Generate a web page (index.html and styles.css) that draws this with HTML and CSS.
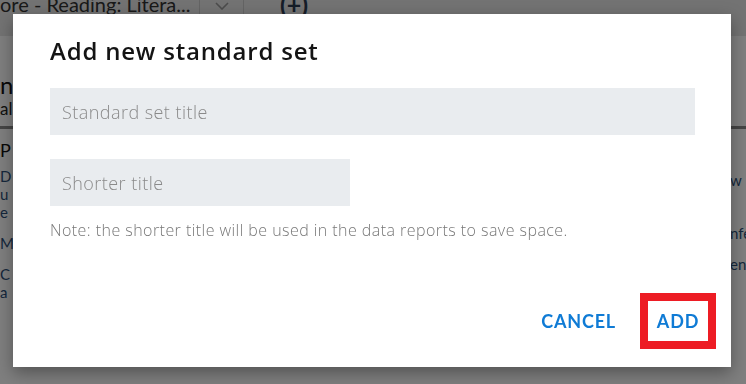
FILE: index.html
```html
<!DOCTYPE html>
<html lang="en">
<head>
    <meta charset="UTF-8">
    <title>Add new standard set</title>
    <link rel="stylesheet" href="styles.css">
</head>
<body>
    <div class="page">
        <div class="topbar">
            <div class="tab-title">ore - Reading: Litera...</div>
            <div class="tab-toggle">
                <svg width="14" height="8" viewBox="0 0 14 8"><path d="M1 1l6 6 6-6" fill="none" stroke="#999" stroke-width="1.6"/></svg>
            </div>
            <div class="tab-add">(+)</div>
        </div>

        <div class="sub-head">
            <div class="sub-name">nded</div>
            <div class="sub-caption">al</div>
        </div>

        <div class="columns">
            <div class="col-left">
                <div class="item-title">P</div>
                <div class="item-text">D<br>u<br>e</div>
                <div class="item-text spaced">M</div>
                <div class="item-text spaced">C<br>a</div>
            </div>
            <div class="col-right">
                <div class="item-text">w</div>
                <div class="item-text spaced-lg">nfe</div>
                <div class="item-text spaced">en</div>
            </div>
        </div>
    </div>

    <div class="overlay"></div>

    <div class="dialog">
        <h2 class="dialog-title">Add new standard set</h2>
        <input class="field field-wide" type="text" placeholder="Standard set title">
        <input class="field field-short" type="text" placeholder="Shorter title">
        <p class="note">Note: the shorter title will be used in the data reports to save space.</p>
        <div class="actions">
            <button class="text-btn">CANCEL</button>
            <button class="text-btn highlighted">ADD</button>
        </div>
    </div>
</body>
</html>
```

FILE: styles.css
```css
body {
    margin: 0;
    font-family: Lato, "Open Sans", sans-serif;
    color: #222;
    background: #fff;
    overflow: hidden;
}

.page {
    width: 746px;
    height: 384px;
}

/* Kopfzeile mit Tabs */
.topbar {
    height: 36px;
    background: #e6e6e6;
    display: flex;
    align-items: flex-start;
}

.tab-title {
    width: 199px;
    font-size: 20px;
    line-height: 18px;
    margin-top: -5px;
    color: #333;
    white-space: nowrap;
    overflow: hidden;
    border-right: 1px solid #c8c8c8;
    height: 30px;
}

.tab-toggle {
    width: 44px;
    height: 30px;
    border-right: 1px solid #c8c8c8;
    display: flex;
    justify-content: center;
    padding-top: 2px;
    box-sizing: border-box;
}

.tab-add {
    margin-left: 36px;
    margin-top: -9px;
    font-size: 25px;
    line-height: 26px;
    font-weight: 700;
    color: #2a3a50;
}

.sub-head {
    padding-top: 36px;
    border-bottom: 3px solid #8a8a8a;
    box-sizing: border-box;
    height: 93px;
}

.sub-name {
    font-size: 24px;
    line-height: 26px;
    color: #111;
}

.sub-caption {
    font-size: 17px;
    line-height: 22px;
    color: #222;
}

.columns {
    display: flex;
    justify-content: space-between;
}

.col-left {
    padding-top: 10px;
}

.col-right {
    padding-top: 36px;
    width: 16px;
    overflow: hidden;
}

.item-title {
    font-size: 18px;
    line-height: 22px;
    color: #111;
}

.item-text {
    font-size: 15px;
    line-height: 18px;
    color: #2d4f78;
    margin-top: 6px;
}

.item-text.spaced {
    margin-top: 13px;
}

.item-text.spaced-lg {
    margin-top: 35px;
}

/* Modal */
.overlay {
    position: fixed;
    inset: 0;
    background: rgba(0, 0, 0, 0.5);
}

.dialog {
    position: absolute;
    top: 14px;
    left: 13px;
    width: 718px;
    height: 353px;
    box-sizing: border-box;
    background: #fff;
    padding: 21px 36px 0 37px;
    box-shadow: 0 6px 16px rgba(0, 0, 0, 0.35);
    display: flex;
    flex-direction: column;
    align-items: flex-start;
    font-family: "Open Sans", Lato, sans-serif;
}

.dialog-title {
    margin: 0;
    font-size: 24px;
    line-height: 32px;
    font-weight: 600;
    letter-spacing: 0.8px;
    color: #141414;
}

.field {
    border: none;
    outline: none;
    background: #e9ecef;
    height: 47px;
    padding: 0 12px;
    font-family: "Open Sans", Lato, sans-serif;
    font-size: 18px;
    letter-spacing: 0.45px;
    color: #333;
    box-sizing: border-box;
}

.field::placeholder {
    color: #8a8a8a;
    font-weight: 300;
}

.field-wide {
    width: 100%;
    margin-top: 21px;
}

.field-short {
    width: 300px;
    margin-top: 24px;
}

.note {
    margin: 14px 0 0;
    font-size: 16px;
    line-height: 21px;
    letter-spacing: 0.45px;
    font-weight: 300;
    color: #777;
}

.actions {
    margin-top: auto;
    margin-bottom: 26px;
    align-self: flex-end;
    display: flex;
    align-items: center;
    gap: 24px;
    margin-right: -13px;
}

.text-btn {
    background: none;
    border: none;
    padding: 0 8px;
    height: 40px;
    font-family: Lato, "Open Sans", sans-serif;
    font-size: 18px;
    font-weight: 700;
    letter-spacing: 0.8px;
    color: #0f7bd5;
    cursor: pointer;
}

.text-btn.highlighted {
    outline: 8px solid #ed1c24;
    width: 60px;
}
```
